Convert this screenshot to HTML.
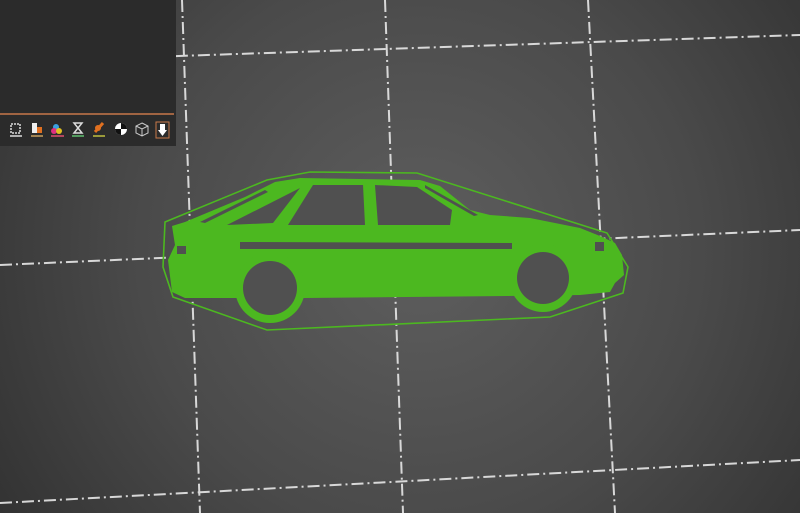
<!DOCTYPE html>
<html><head><style>
html,body{margin:0;padding:0;width:800px;height:513px;overflow:hidden;background:#3a3a3a}
</style></head><body>
<svg width="800" height="513" viewBox="0 0 800 513" xmlns="http://www.w3.org/2000/svg" style="display:block">
<defs>
<radialGradient id="bg" cx="420" cy="250" r="560" gradientUnits="userSpaceOnUse">
<stop offset="0" stop-color="#5e5e5e"/><stop offset="0.5" stop-color="#4a4a4a"/><stop offset="1" stop-color="#2c2c2c"/>
</radialGradient>
</defs>
<rect width="800" height="513" fill="url(#bg)"/>
<g stroke="#e8e8e8" stroke-width="2" stroke-dasharray="12 4 2 4" fill="none" opacity="0.9">
<line x1="182" y1="0" x2="200" y2="513"/>
<line x1="385" y1="0" x2="403" y2="513"/>
<line x1="588" y1="0" x2="615" y2="513"/>
<line x1="0" y1="62" x2="800" y2="35"/>
<line x1="0" y1="265" x2="800" y2="230"/>
<line x1="0" y1="503" x2="800" y2="460"/>
</g>
<path d="M165,222 L267,180 L310,172 L417,173 L607,233 L628,267 L623,293 L550,317 L267,330 L173,297 L163,267 Z" fill="none" stroke="#4cb820" stroke-width="1.6"/>
<path d="M172,226 L185,222 L245,197 L275,182 L300,178 L420,180 L440,186 L470,210 L490,215 L530,218 L580,228 L600,236 L615,243 L622,255 L624,275 L615,283 L610,292 L580,295 L508,296 L305,298 L234,298 L185,298 L172,292 L168,260 L175,245 Z" fill="#4cb820"/>
<circle cx="270" cy="288" r="35" fill="#4cb820"/>
<circle cx="543" cy="278" r="34" fill="#4cb820"/>
<g fill="#505050">
<polygon points="227,225 300,188 273,223"/>
<polygon points="288,225 313,185 363,185 365,225"/>
<polygon points="378,225 375,185 417,187 452,210 450,225"/>
<polygon points="240,242 512,243 512,249 240,249"/>
<polygon points="200,222 265,190 268,192 205,223"/>
<polygon points="425,185 478,215 474,216 425,188"/>
<circle cx="270" cy="288" r="27"/>
<circle cx="543" cy="278" r="26"/>
<rect x="177" y="246" width="9" height="8"/>
<rect x="595" y="242" width="9" height="9"/>
</g>
<rect x="0" y="0" width="176" height="146" fill="#2b2b2b"/>
<line x1="0" y1="114" x2="174" y2="114" stroke="#c8784a" stroke-width="1.5"/>
<g stroke-width="1.5">
<rect x="11" y="124" width="9" height="9" fill="none" stroke="#ddd" stroke-dasharray="2 1"/><line x1="10" y1="136" x2="22" y2="136" stroke="#ddd"/>
<rect x="32" y="123" width="5" height="10" fill="#eee"/><rect x="37" y="127" width="5" height="6" fill="#e07020"/><line x1="31" y1="136" x2="43" y2="136" stroke="#c8a060"/>
<circle cx="56" cy="127" r="3" fill="#3aa0e0"/><circle cx="54" cy="131" r="3" fill="#e03080"/><circle cx="59" cy="131" r="3" fill="#e0c020"/><line x1="51" y1="136" x2="64" y2="136" stroke="#e05070"/>
<path d="M74,123 L82,123 L78,128 L82,133 L74,133 L78,128 Z" fill="none" stroke="#ddd"/><line x1="72" y1="136" x2="84" y2="136" stroke="#60c070"/>
<path d="M95,132 L103,123" stroke="#e07020" stroke-width="3"/><circle cx="98" cy="128" r="3" fill="#e07020"/><line x1="93" y1="136" x2="105" y2="136" stroke="#c0c040"/>
<circle cx="121" cy="129" r="6" fill="#fff"/><path d="M121,123 A6,6 0 0 1 127,129 L121,129 Z M121,129 L115,129 A6,6 0 0 0 121,135 Z" fill="#111"/>
<path d="M142,123 L148,126 L148,133 L142,136 L136,133 L136,126 Z M136,126 L142,129 L148,126 M142,129 L142,136" fill="none" stroke="#ccc" stroke-width="1"/>
<rect x="156" y="122" width="13" height="16" fill="none" stroke="#c8784a" stroke-width="1"/><path d="M160,124 L165,124 L165,130 L167,130 L162.5,136 L158,130 L160,130 Z" fill="#fff"/>
</g>
</svg>
</body></html>
